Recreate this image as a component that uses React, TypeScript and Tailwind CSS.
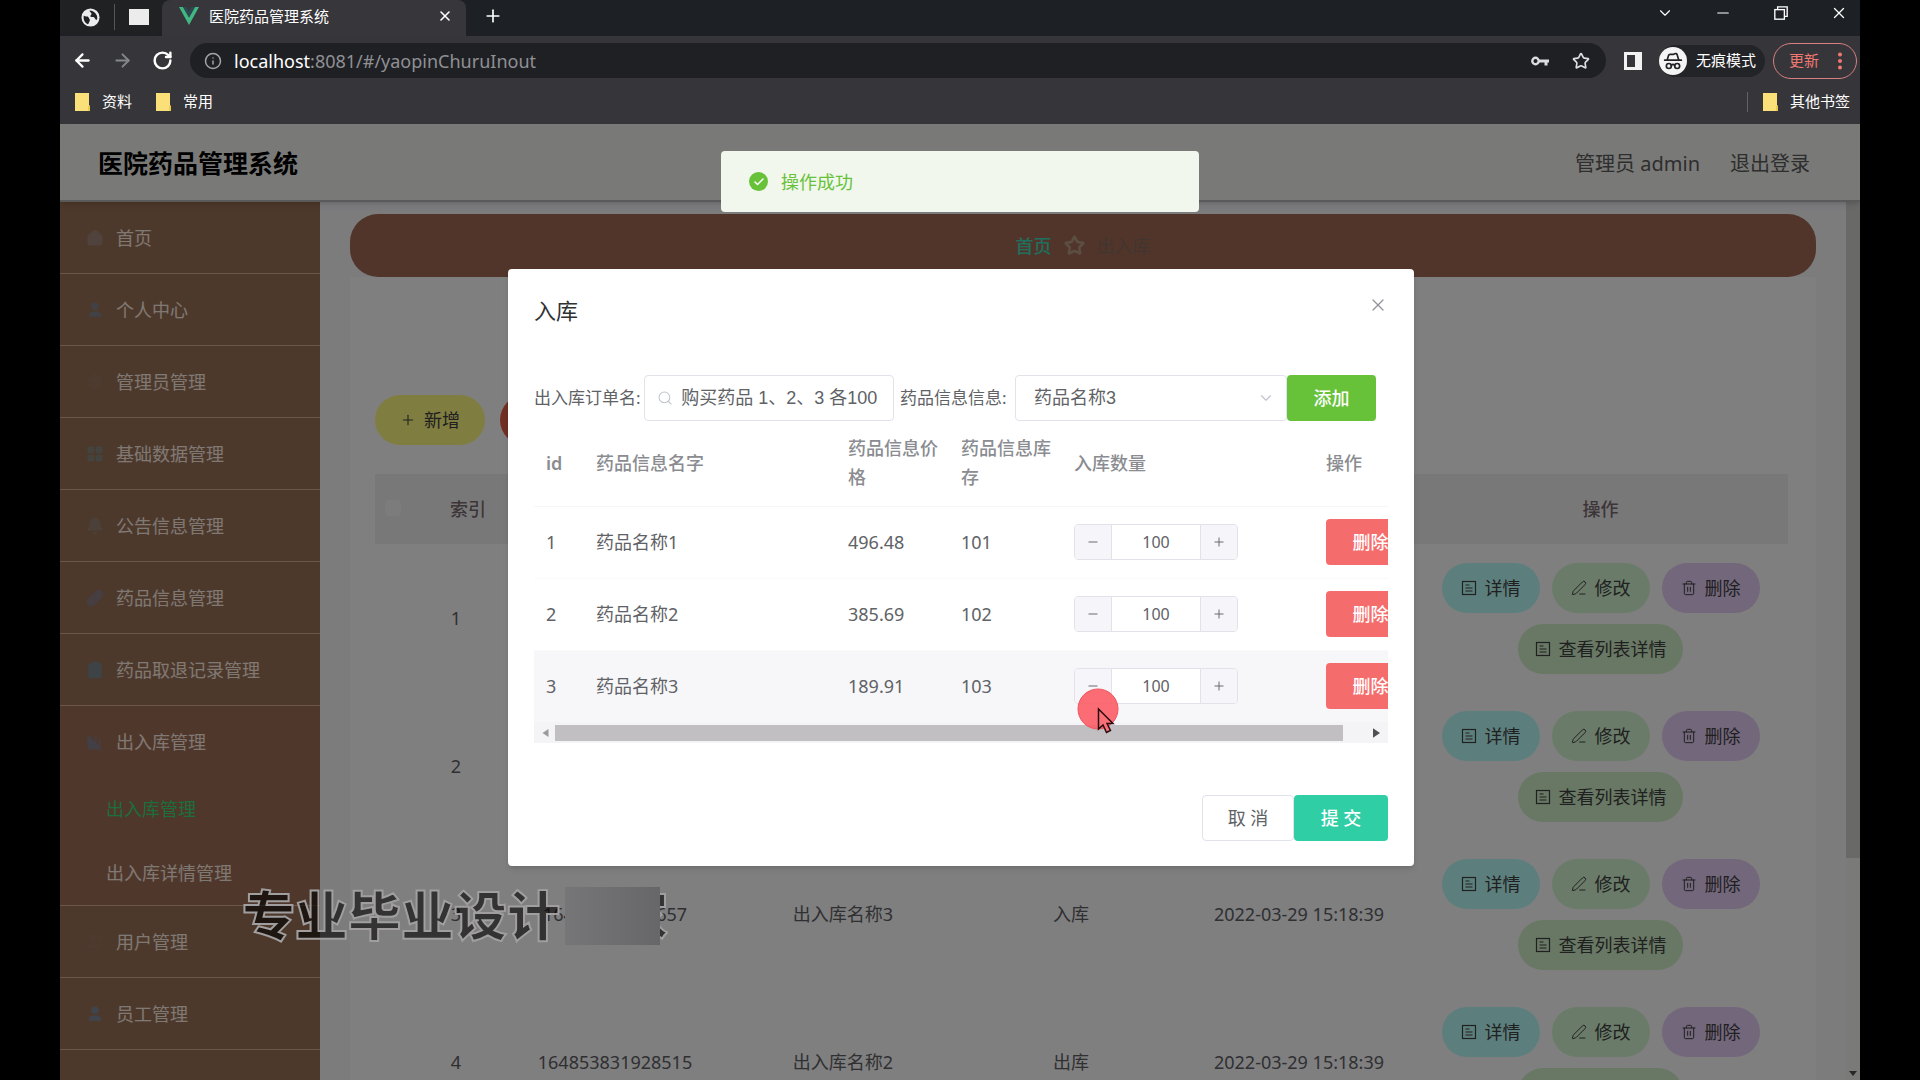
import React from "react";
import {
  ArrowLeft,
  ArrowRight,
  BarChart3,
  Bell,
  Check,
  ChevronDown,
  ClipboardList,
  HatGlasses,
  Home,
  Info,
  LayoutGrid,
  Minus,
  PenLine,
  Pill,
  Plus,
  RotateCw,
  Search,
  Settings,
  Star,
  Trash2,
  User,
  Users,
  X,
} from "lucide-react";
import type { LucideIcon } from "lucide-react";

type MenuEntry = {
  label: string;
  icon: LucideIcon;
  tone: string;
  children?: { label: string; active?: boolean }[];
};

const menu: MenuEntry[] = [
  { label: "首页", icon: Home, tone: "text-[#a08478] fill-[#a08478]" },
  { label: "个人中心", icon: User, tone: "text-[#84828e] fill-[#84828e]" },
  { label: "管理员管理", icon: Settings, tone: "text-[#9a7660] fill-[#9a7660]" },
  { label: "基础数据管理", icon: LayoutGrid, tone: "text-[#86867e] fill-[#86867e]" },
  { label: "公告信息管理", icon: Bell, tone: "text-[#968272] fill-[#968272]" },
  { label: "药品信息管理", icon: Pill, tone: "text-[#8c7c80] fill-[#8c7c80]" },
  { label: "药品取退记录管理", icon: ClipboardList, tone: "text-[#7c868e] fill-[#7c868e]" },
  {
    label: "出入库管理",
    icon: BarChart3,
    tone: "text-[#84808c] fill-[#84808c]",
    children: [{ label: "出入库管理", active: true }, { label: "出入库详情管理" }],
  },
  { label: "用户管理", icon: Users, tone: "text-[#9a7660] fill-[#9a7660]" },
  { label: "员工管理", icon: User, tone: "text-[#80889a] fill-[#80889a]" },
];

const records = [
  { id: "164853835712457", name: "出入库名称5", kind: "出库", time: "2022-03-29 15:18:39" },
  { id: "164853834419216", name: "出入库名称4", kind: "入库", time: "2022-03-29 15:18:39" },
  { id: "16485383192657", name: "出入库名称3", kind: "入库", time: "2022-03-29 15:18:39" },
  { id: "164853831928515", name: "出入库名称2", kind: "出库", time: "2022-03-29 15:18:39" },
];

const drugs = [
  { name: "药品名称1", price: "496.48", stock: 101, count: "100" },
  { name: "药品名称2", price: "385.69", stock: 102, count: "100" },
  { name: "药品名称3", price: "189.91", stock: 103, count: "100" },
];

function Folder() {
  return (
    <svg viewBox="0 0 15 18" className="h-[18px] w-[15px]" aria-hidden="true">
      <path d="M0 0h14v12l1 1v5H0z" fill="#fbe07a" />
      <path d="M13 13h2v5h-2z" fill="#eac94f" />
    </svg>
  );
}

function DocIcon() {
  return (
    <svg viewBox="0 0 16 16" className="size-4" fill="none" stroke="currentColor" strokeWidth="1.2" aria-hidden="true">
      <rect x="1.5" y="1.5" width="13" height="13" />
      <path d="M4.5 5h4M4.5 8h7M4.5 11h7" />
    </svg>
  );
}

function Browser() {
  return (
    <div className="bg-[#36363a] text-[15px] text-white">
      <div className="flex h-9 bg-[#1d2024]">
        <div className="flex h-[34px] w-[102px] items-center gap-3.5 rounded-br-lg bg-[#202123] pl-[21px]">
          <svg viewBox="0 0 20 20" className="size-[19px]" aria-hidden="true">
            <circle cx="10" cy="10" r="9.500" fill="#ececec" />
            <path d="M3 8c2 2 4 0 5 2s2 2 1 4-1 3-2 3c-3-1-5-5-4-9zM9 2.500c0 2 2 1.500 2 3.500S9 8 10 9s3 0 4 1 1 3 3 2c1-4-2-9-8-9.500z" fill="#202123" />
          </svg>
          <span className="h-[26px] w-px bg-[#55565a]" />
          <span className="h-4 w-5 bg-[#ececec]" />
        </div>
        <div className="flex w-[304px] items-center rounded-t-lg bg-[#36363b] pr-[13px] pb-1 pl-[17px]">
          <svg viewBox="0 0 20 18" className="mr-2.5 h-[18px] w-5" aria-hidden="true">
            <path d="M0 0h4l6 10.5L16 0h4L10 18z" fill="#41b883" />
            <path d="M4 0h3.6L10 4.4 12.4 0H16l-6 10.5z" fill="#2c4a50" />
          </svg>
          <span className="flex-1">医院药品管理系统</span>
          <button aria-label="关闭标签页"><X className="size-4" strokeWidth={2.4} /></button>
        </div>
        <button aria-label="新标签页" className="ml-[17px] pb-1"><Plus className="size-5" strokeWidth={2} /></button>
        <div className="ml-auto flex items-center gap-10 pr-3 pb-2.5">
          <button aria-label="搜索标签页"><ChevronDown className="size-[18px]" strokeWidth={1.5} /></button>
          <button aria-label="最小化"><Minus className="size-[18px]" strokeWidth={1.6} /></button>
          <button aria-label="还原">
            <svg viewBox="0 0 16 16" className="size-[18px]" fill="none" stroke="currentColor" strokeWidth="1.2">
              <rect x="2.500" y="5" width="8.500" height="8.500" />
              <path d="M5 5V2.500h8.500V11H11" />
            </svg>
          </button>
          <button aria-label="关闭"><X className="size-[18px]" strokeWidth={1.7} /></button>
        </div>
      </div>
      <div className="flex h-[49px] items-center pl-3">
        <div className="flex w-[118px] items-center gap-[19px]">
          <button aria-label="后退"><ArrowLeft className="size-[21px]" strokeWidth={2.6} /></button>
          <button aria-label="前进"><ArrowRight className="size-[21px] text-[#86878b]" strokeWidth={2.2} /></button>
          <button aria-label="刷新"><RotateCw className="size-[21px]" strokeWidth={2.8} /></button>
        </div>
        <div className="flex h-[35px] flex-1 items-center rounded-full bg-[#1f2024] pr-4 pl-[14px] text-lg">
          <Info className="mr-3 size-[18px] text-[#a4a5a8]" strokeWidth={2} />
          <span>localhost</span>
          <span className="flex-1 text-[#8f9094]">:8081/#/yaopinChuruInout</span>
          <svg viewBox="0 0 18 12" className="mr-[23px] h-3 w-[18px]" aria-hidden="true">
            <circle cx="4.500" cy="6" r="3.200" fill="none" stroke="#dcdcde" strokeWidth="2.400" />
            <path d="M8 4.500h10v3h-1.500v3h-3v-3H8z" fill="#dcdcde" />
          </svg>
          <Star className="size-[18px] text-[#e0e0e2]" strokeWidth={2.2} />
        </div>
        <svg viewBox="0 0 18 18" className="ml-[18px] size-[18px]" aria-hidden="true">
          <path d="M0 0h18v18H0zM3 3v12h8V3z" fill="#f2f2f2" fillRule="evenodd" />
        </svg>
        <div className="ml-[17px] flex h-8 items-center gap-[9px] rounded-full bg-[#232428] pr-[9px]">
          <span className="flex size-7 items-center justify-center rounded-full bg-[#f4f4f4]">
            <HatGlasses className="size-5 text-[#202124]" strokeWidth={2} />
          </span>
          无痕模式
        </div>
        <button className="mr-[3px] ml-2 flex h-9 w-[84px] items-center justify-between rounded-full border border-[#d87f80] pr-3.5 pl-[15px] text-[#f07871]">
          更新
          <svg viewBox="0 0 4 18" className="h-[18px] w-1" fill="currentColor" aria-hidden="true">
            <circle cx="2" cy="2.500" r="2" /><circle cx="2" cy="9" r="2" /><circle cx="2" cy="15.500" r="2" />
          </svg>
        </button>
      </div>
      <div className="flex h-[39px] items-center pr-2.5 pb-1.5 pl-[15px]">
        <Folder /><span className="mr-6 ml-3">资料</span>
        <Folder /><span className="ml-3">常用</span>
        <span className="mr-[15px] ml-auto h-5 w-px bg-[#616166]" />
        <Folder /><span className="ml-3">其他书签</span>
      </div>
    </div>
  );
}

function Sidebar() {
  return (
    <nav className="w-[260px] shrink-0 overflow-hidden bg-[#9a7256] text-lg text-[#fff0e6]">
      {menu.map(({ label, icon: Icon, tone, children }) => (
        <div key={label} className={children ? "border-b border-[#d8ac8a] bg-[#9f6e56]" : "border-b border-[#d8ac8a]"}>
          <a href="#" className="flex h-[71px] items-center gap-3 pl-[26px]">
            <Icon className={`size-[18px] ${tone}`} />
            {label}
          </a>
          {children?.map((c) => (
            <a
              key={c.label}
              href="#"
              className={c.active ? "flex h-16 items-center pl-[46px] text-[#38dc78]" : "flex h-16 items-center pl-[46px]"}
            >
              {c.label}
            </a>
          ))}
        </div>
      ))}
    </nav>
  );
}

const pill = "flex h-[50px] items-center justify-center gap-2 rounded-full text-lg text-[#404040]";

function Records() {
  return (
    <table className="w-full table-fixed text-center text-lg text-[#606066]">
      <colgroup>
        <col className="w-9" />
        <col className="w-[90px]" />
        <col />
        <col />
        <col />
        <col />
        <col className="w-[375px]" />
      </colgroup>
      <thead>
        <tr className="h-[70px] bg-[#f3f1f3] text-[#7a6c70]">
          <th className="font-normal"><input type="checkbox" aria-label="全选" className="size-4 appearance-none rounded-sm border border-[#f8f8f8] bg-[#f8f8f8]" /></th>
          <th className="pl-6 font-medium">索引</th>
          <th className="font-medium">出入库唯一编号</th>
          <th className="font-medium">出入库名称</th>
          <th className="font-medium">类型</th>
          <th className="font-medium">添加时间</th>
          <th className="font-medium">操作</th>
        </tr>
      </thead>
      <tbody>
        {records.map((r, i) => (
          <tr key={r.id} className="h-[148px]">
            <td />
            <td>{i + 1}</td>
            <td>{r.id}</td>
            <td>{r.name}</td>
            <td>{r.kind}</td>
            <td>{r.time}</td>
            <td>
              <div className="flex flex-wrap justify-center gap-x-3 gap-y-[11px]">
                <button className={`${pill} w-[98px] bg-[#b8fffa]`}><DocIcon />详情</button>
                <button className={`${pill} w-[98px] bg-[#d4f8d2]`}><PenLine className="size-4" strokeWidth={1.5} />修改</button>
                <button className={`${pill} w-[98px] bg-[#e6cef8]`}><Trash2 className="size-4" strokeWidth={1.5} />删除</button>
                <button className={`${pill} w-[165px] bg-[#d0f0c8]`}><DocIcon />查看列表详情</button>
              </div>
            </td>
          </tr>
        ))}
      </tbody>
    </table>
  );
}

function StockDialog() {
  return (
    <section role="dialog" aria-labelledby="dlg-title" className="w-full max-w-[906px] rounded-sm bg-white px-[26px] pt-6 pb-[25px] text-lg text-[#606266] shadow-md">
      <header className="flex h-[34px] items-center justify-between">
        <h2 id="dlg-title" className="text-[22px] text-[#303133]">入库</h2>
        <button aria-label="关闭" className="pb-2.5"><X className="size-5 text-[#909399]" strokeWidth={1.5} /></button>
      </header>
      <div className="mt-12 flex h-[46px] items-center">
        <label htmlFor="order" className="w-[110px] text-[17px] whitespace-nowrap">出入库订单名:</label>
        <div className="flex h-full w-[250px] items-center gap-2 rounded border border-[#e2e3ea] pl-3">
          <Search className="size-[18px] text-[#c0c4cc]" strokeWidth={1.5} />
          <input id="order" defaultValue="购买药品 1、2、3 各100" className="w-full min-w-0 font-['Liberation_Sans','Noto_Sans_CJK_SC',sans-serif] outline-none" />
        </div>
        <label htmlFor="drug" className="ml-1.5 w-[115px] text-[17px] whitespace-nowrap">药品信息信息:</label>
        <div className="grid h-full flex-1 items-center">
          <select id="drug" defaultValue="药品名称3" className="col-start-1 row-start-1 h-full w-full appearance-none rounded border border-[#e2e3ea] pl-[18px] font-['Liberation_Sans','Noto_Sans_CJK_SC',sans-serif] outline-none">
            {drugs.map((d) => <option key={d.name}>{d.name}</option>)}
          </select>
          <ChevronDown className="pointer-events-none col-start-1 row-start-1 mr-3 size-[18px] justify-self-end text-[#c0c4cc]" strokeWidth={1.5} />
        </div>
        <button className="mr-3 h-full w-[89px] rounded bg-[#67c23a] font-medium text-white">添加</button>
      </div>
      <div className="overflow-hidden">
        <table className="w-[905px] table-fixed text-left">
          <colgroup>
            <col className="w-[50px]" />
            <col className="w-[252px]" />
            <col className="w-[113px]" />
            <col className="w-[113px]" />
            <col className="w-[252px]" />
            <col className="w-[125px]" />
          </colgroup>
          <thead>
            <tr className="h-[85px] border-b border-[#f5f5fa] leading-[29px] text-[#8a8c91]">
              <th className="pr-2 pl-3 font-semibold">id</th>
              <th className="pr-2 pl-3 font-medium">药品信息名字</th>
              <th className="pr-2 pl-3 font-medium">药品信息价格</th>
              <th className="pr-2 pl-3 font-medium">药品信息库存</th>
              <th className="pr-2 pl-3 font-medium">入库数量</th>
              <th className="pr-2 pl-3 font-medium">操作</th>
            </tr>
          </thead>
          <tbody>
            {drugs.map((d, i) => (
              <tr key={d.name} className={i === 2 ? "h-[72px] bg-[#f7f7fa]" : "h-[72px] border-b border-[#fafafc]"}>
                <td className="px-3">{i + 1}</td>
                <td className="px-3">{d.name}</td>
                <td className="px-3">{d.price}</td>
                <td className="px-3">{d.stock}</td>
                <td className="px-3">
                  <div className="flex h-9 w-[164px] overflow-hidden rounded border border-[#e2e3ea] bg-white text-base">
                    <button aria-label="减少" className="flex w-[37px] items-center justify-center border-r border-[#e2e3ea] bg-[#f6f6fa]"><Minus className="size-3.5" strokeWidth={1.6} /></button>
                    <input aria-label={`${d.name}入库数量`} defaultValue={d.count} className="min-w-0 flex-1 text-center outline-none" />
                    <button aria-label="增加" className="flex w-[37px] items-center justify-center border-l border-[#e2e3ea] bg-[#f6f6fa]"><Plus className="size-3.5" strokeWidth={1.6} /></button>
                  </div>
                </td>
                <td className="px-3">
                  <button className="h-[46px] w-[89px] rounded bg-[#f56c6c] font-medium text-white">删除</button>
                </td>
              </tr>
            ))}
          </tbody>
        </table>
        <div className="flex h-[21px] items-center gap-1.5 bg-[#f4f4f6] px-2">
          <svg viewBox="0 0 6 8" className="h-2 w-[7px]" aria-hidden="true"><path d="M6 0v8L0 4z" fill="#9a9a9a" /></svg>
          <span className="h-4 flex-1 bg-[#c1bfc1]" />
          <svg viewBox="0 0 6 8" className="ml-6 h-2.5 w-[7px]" aria-hidden="true"><path d="M0 0v8l6-4z" fill="#505050" /></svg>
        </div>
      </div>
      <footer className="mt-[52px] flex justify-end">
        <button className="h-[46px] w-[92px] rounded border border-[#e2e3ea]">取 消</button>
        <button className="h-[46px] w-[94px] rounded bg-[#30cea5] font-medium text-white">提 交</button>
      </footer>
    </section>
  );
}

export default function App() {
  return (
    <div className="h-screen overflow-hidden bg-black px-[60px] font-['Noto_Sans','Noto_Sans_CJK_SC',sans-serif]">
      <div className="relative flex h-full flex-col overflow-hidden">
        <Browser />
        <div className="relative flex min-h-0 flex-1 flex-col bg-white">
          <header className="z-10 flex h-[78px] shrink-0 items-center border-b-2 border-[#b4b4b4] bg-[#f2f2ef] pt-1 pr-[50px] pl-[38px] shadow-md">
            <h1 className="flex-1 text-[25px] font-bold text-black">医院药品管理系统</h1>
            <span className="text-xl text-[#5c5c5c]">管理员 admin</span>
            <a href="#" className="ml-[30px] text-xl text-[#5c5c5c]">退出登录</a>
          </header>
          <div className="flex min-h-0 flex-1">
            <Sidebar />
            <main className="min-w-0 flex-1 overflow-hidden bg-[#f8f8fb] px-[30px] pt-3">
              <nav aria-label="面包屑" className="flex h-[63px] items-center justify-center gap-3 rounded-[28px] bg-[#a26b54] text-lg">
                <a href="#" className="font-medium text-[#40dcbc]">首页</a>
                <Star className="size-[21px] text-[#b89c84]" strokeWidth={3} />
                <span className="text-[#846a60]">出入库</span>
              </nav>
              <section className="bg-[#fefefe] pt-[118px] pr-7 pl-[25px]">
                <div className="flex gap-[15px]">
                  <button className={`${pill} w-[110px] bg-[#fffa80]`}><Plus className="size-4" strokeWidth={1.6} />新增</button>
                  <button className={`${pill} w-[110px] bg-[#e06048]`}><Trash2 className="size-4" strokeWidth={1.6} />删除</button>
                </div>
                <div className="pt-[29px]">
                  <Records />
                </div>
              </section>
            </main>
            <div className="flex w-[14px] flex-col items-center bg-[#f4f4f2]">
              <span className="w-full flex-[3] bg-[#d2d3d0]" />
              <span className="flex flex-1 items-end pb-1">
                <svg viewBox="0 0 8 5" className="h-[5px] w-2" aria-hidden="true"><path d="M0 0h8L4 5z" fill="#505050" /></svg>
              </span>
            </div>
          </div>
          <div className="absolute inset-0 z-20 flex items-start justify-center bg-black/50 pt-[145px] pl-0.5">
            <StockDialog />
          </div>
          <div role="status" className="absolute top-[27px] left-1/2 z-30 flex h-[61px] w-[478px] -translate-x-1/2 items-center gap-[13px] rounded bg-[#f1f7ec] pl-7 text-lg text-[#67c23a]">
            <span className="flex size-[19px] items-center justify-center rounded-full bg-[#67c23a]">
              <Check className="size-3 text-white" strokeWidth={3} />
            </span>
            操作成功
          </div>
        </div>
        <div className="absolute top-[886px] left-[182px] z-40 flex h-[60px] items-center text-[53px] font-black" aria-hidden="true">
          <span className="whitespace-nowrap text-black/60 [-webkit-text-stroke:2px_#a09e9e]">专业毕业设计</span>
          <span className="ml-[5px] h-[58px] w-[95px] bg-linear-to-r from-[#767577] to-[#676668]" />
          <span className="flex w-2 justify-end overflow-hidden text-black/60 [-webkit-text-stroke:2px_#a09e9e]">家</span>
        </div>
        <svg viewBox="0 0 44 48" className="absolute top-[688px] left-[1017px] z-40 h-12 w-11" aria-hidden="true">
          <circle cx="21" cy="21" r="20" fill="#fb6068" fillOpacity="0.920" stroke="#f05560" />
          <path d="M21.500 21v20l4.500-4 3.500 7.500 4-2-3.500-7H36z" fill="#fb7076" stroke="#2a0d10" strokeWidth="1.500" />
        </svg>
      </div>
    </div>
  );
}
